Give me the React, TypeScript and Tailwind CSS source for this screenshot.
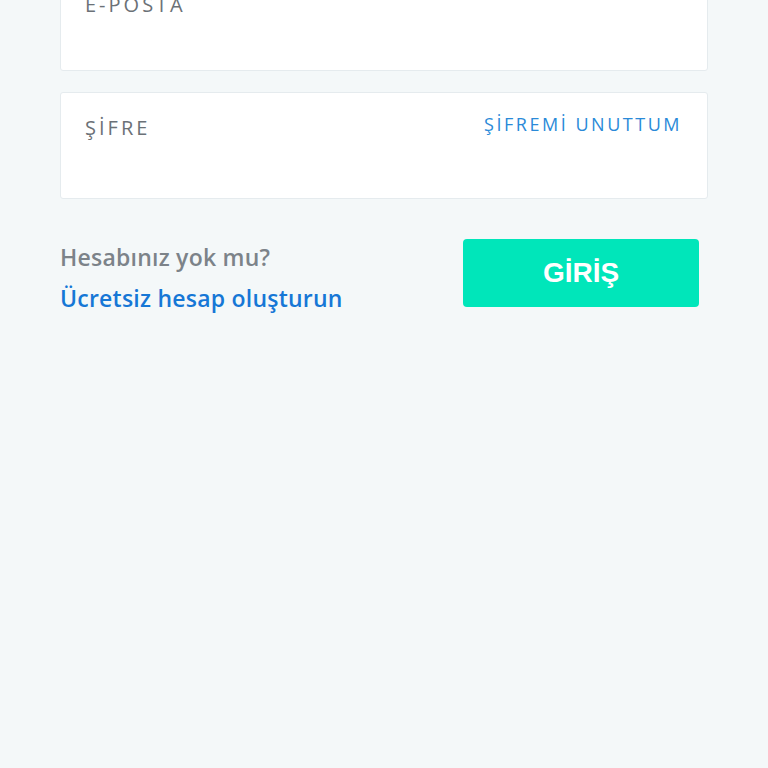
export default function App() {
  return (
    <div className="min-h-[768px] w-full overflow-hidden bg-[#f4f8f9] px-[60px]" style={{ fontFamily: "'Open Sans', 'Liberation Sans', sans-serif" }}>
      <div className="-mt-[33px] flex flex-col gap-[21px]">
        <div className="h-[104px] rounded-[3px] border border-[#e5ebee] bg-white px-[24px] pt-[22px]">
          <span className="text-[20px] tracking-[0.15em] text-[#6b7177]">E-POSTA</span>
        </div>
        <div className="flex h-[107px] items-start justify-between rounded-[3px] border border-[#e5ebee] bg-white pl-[24px] pr-[25px] pt-[20px]">
          <span className="text-[20px] tracking-[0.15em] text-[#6b7177]">ŞİFRE</span>
          <span className="-mt-[2px] text-[18px] tracking-[0.14em] text-[#2a8ad8]">ŞİFREMİ UNUTTUM</span>
        </div>
      </div>
      <div className="mt-[40px] flex items-start justify-between pr-[9px]">
        <div className="flex flex-col pt-[3px]">
          <span className="text-[23px] font-semibold leading-[30px] tracking-[0.01em] text-[#7c8389]">Hesabınız yok mu?</span>
          <span className="mt-[11px] text-[23px] font-semibold leading-[30px] tracking-[0.01em] text-[#1677d6]">Ücretsiz hesap oluşturun</span>
        </div>
        <button className="flex h-[68px] w-[236px] items-center justify-center rounded-[4px] bg-[#00e6ba] text-[28px] font-bold text-white" style={{ fontFamily: "'Liberation Sans', Arial, sans-serif" }}>
          GİRİŞ
        </button>
      </div>
    </div>
  );
}
